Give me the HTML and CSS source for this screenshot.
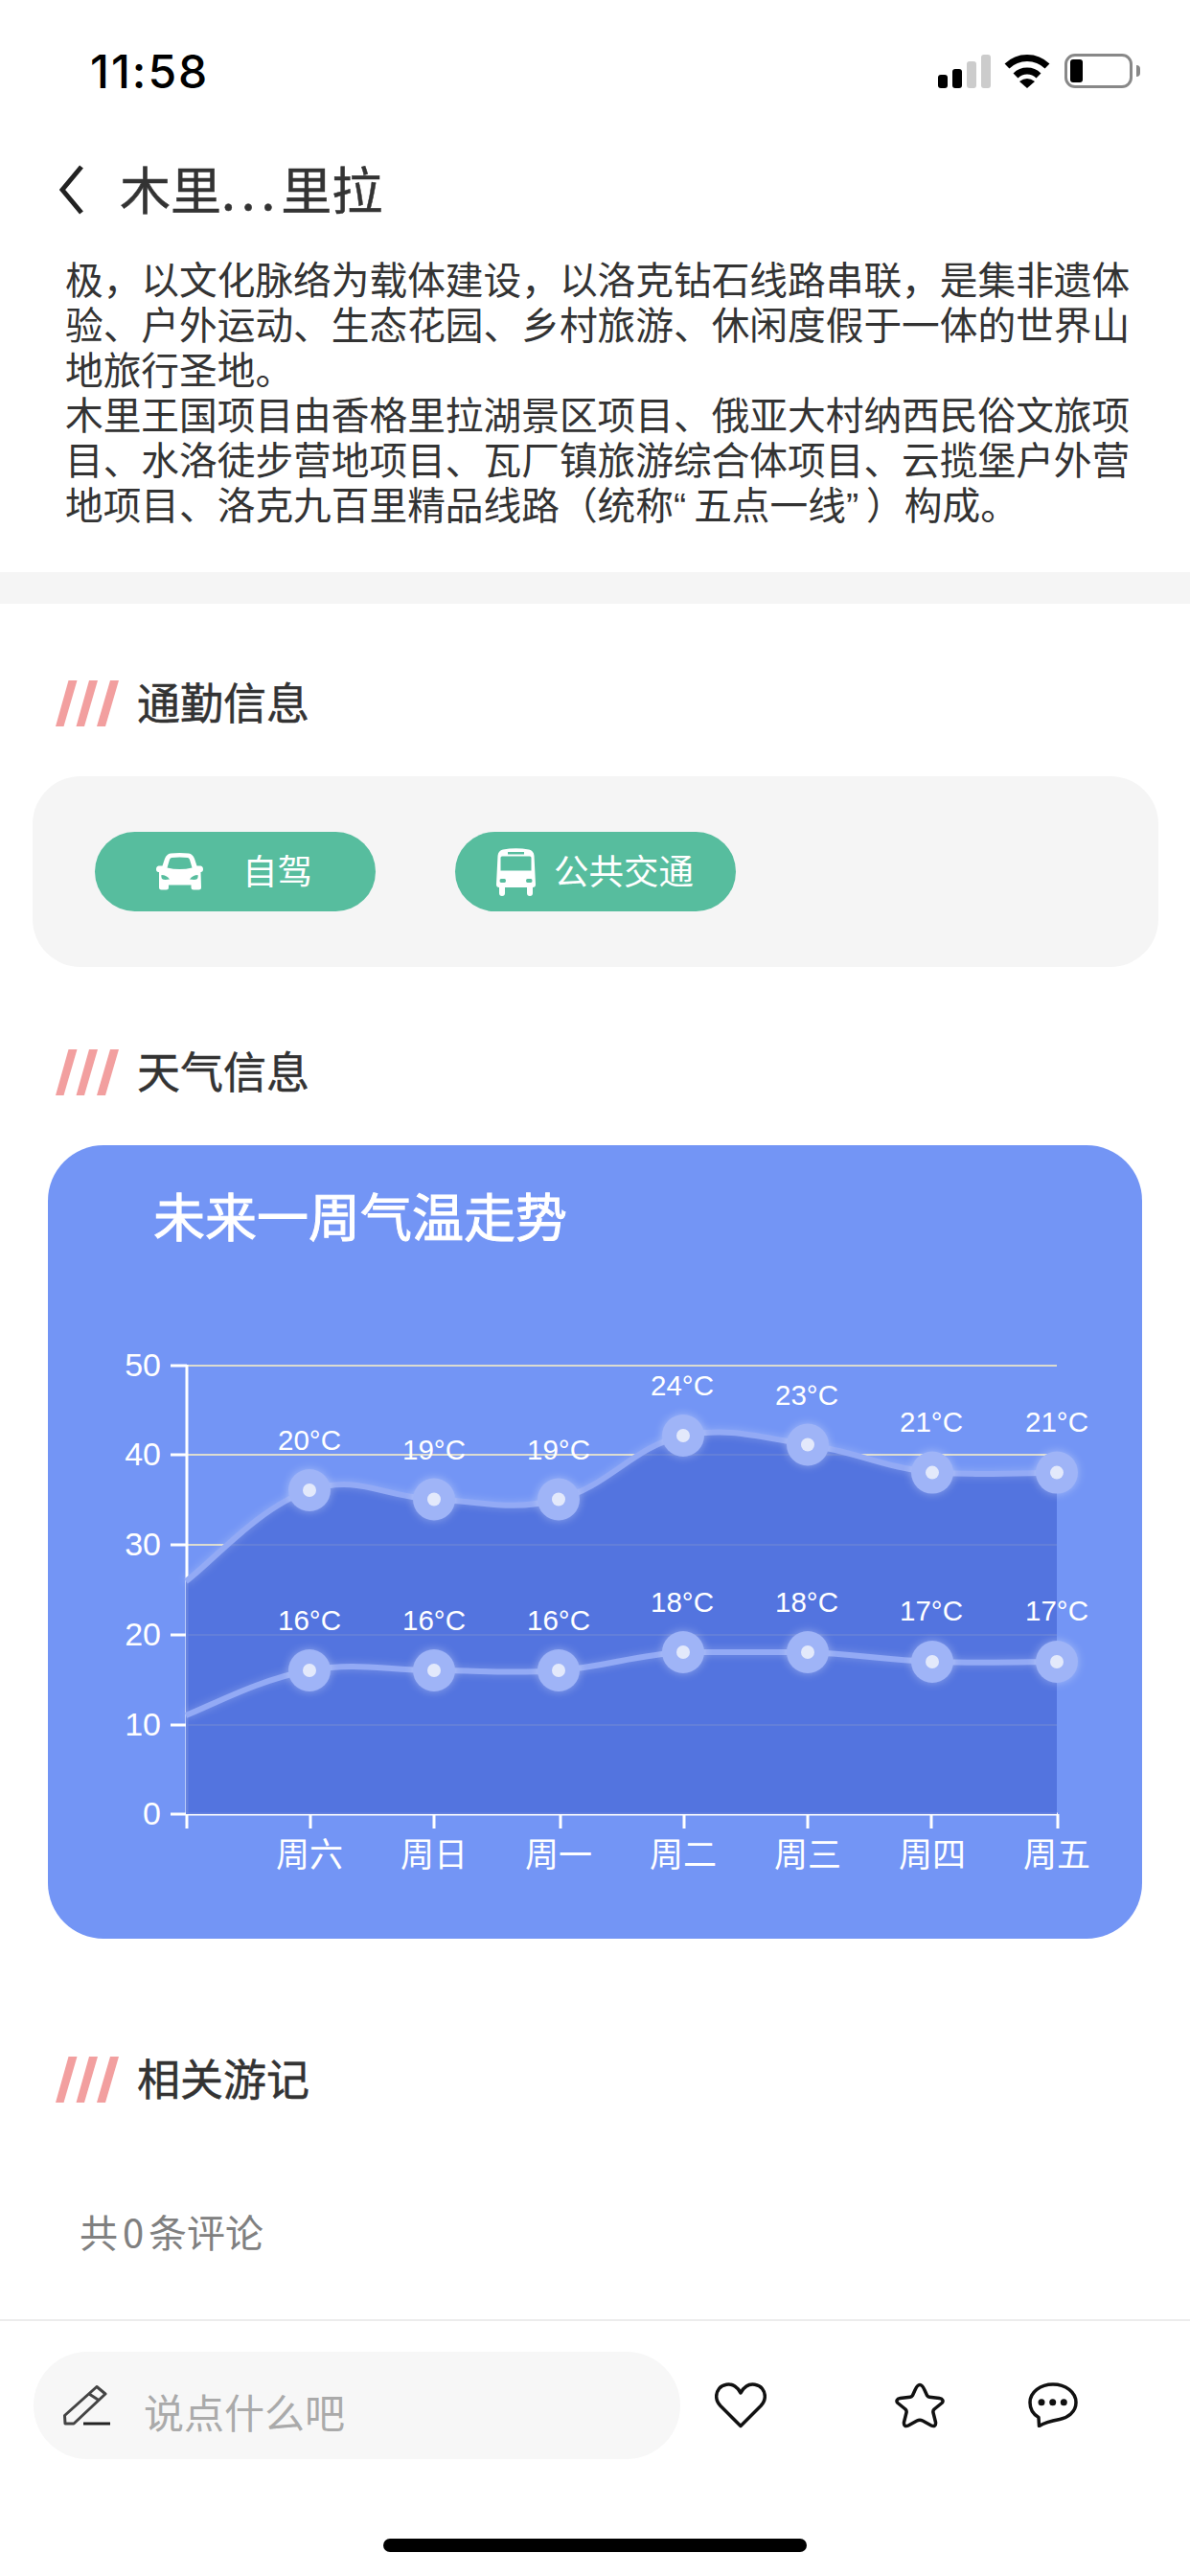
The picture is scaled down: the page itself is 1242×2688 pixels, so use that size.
FILE: index.html
```html
<!DOCTYPE html>
<html lang="zh-CN">
<head>
    <meta charset="UTF-8">
    <meta name="viewport" content="width=device-width, initial-scale=1.0">
    <title>木里香格里拉</title>
    <link rel="stylesheet" href="styles.css">
</head>
<body>
    <svg class="defs" width="0" height="0">
        <symbol id="stripes" viewBox="0 0 66 48">
            <polygon points="0,48 8.5,48 22.5,0 13.5,0"/>
            <polygon points="21.5,48 30,48 44,0 35,0"/>
            <polygon points="43,48 52,48 66,0 57,0"/>
        </symbol>
    </svg>

    <div class="status-bar">
        <div class="time">11:58</div>
        <div class="status-icons">
            <div class="signal">
                <span class="bar bar-1"></span>
                <span class="bar bar-2"></span>
                <span class="bar bar-3"></span>
                <span class="bar bar-4"></span>
            </div>
            <svg class="wifi" viewBox="0 0 48 36">
                <path class="wifi-arc" d="M3 13A30 30 0 0 1 45 13"/>
                <path class="wifi-arc" d="M12 23A17 17 0 0 1 36 23"/>
                <path d="M16 29Q24 23 32 29L24 36Z"/>
            </svg>
            <div class="battery"><span class="battery-level"></span></div>
            <span class="battery-cap"></span>
        </div>
    </div>

    <div class="nav">
        <svg class="back" viewBox="0 0 25 52"><path d="M23 2L3 26L23 50"/></svg>
        <div class="nav-title">木里<span class="dots">...</span>里拉</div>
    </div>

    <div class="desc">
        极，以文化脉络为载体建设，以洛克钻石线路串联，是集非遗体验、户外运动、生态花园、乡村旅游、休闲度假于一体的世界山地旅行圣地。<br>
        木里王国项目由香格里拉湖景区项目、俄亚大村纳西民俗文旅项目、水洛徒步营地项目、瓦厂镇旅游综合体项目、云揽堡户外营地项目、洛克九百里精品线路（统称“&thinsp;五点一线”&thinsp;）构成。
    </div>

    <div class="band"></div>

    <div class="main">
        <div class="heading heading-first">
            <svg class="stripes"><use href="#stripes"/></svg>
            <span class="heading-text">通勤信息</span>
        </div>
        <div class="commute">
            <div class="pill">
                <svg class="car" viewBox="0 0 49 39">
                    <path fill-rule="evenodd" d="M15 .5Q24.500 -.5 34 .5Q38 1 40 6L42.500 13.500H46.500Q49 14 49 17Q49 20 46.500 20L47 36Q47 38.500 44.500 38.500H39Q36.500 38.500 36.500 36V33.500H13V36Q13 38.500 10.500 38.500H5.500Q3 38.500 3 36V20H2.500Q0 20 0 17Q0 14 2.500 13.500H6.500L9 6Q11 1 15 .5ZM16 5Q24.500 4 33 5Q34.500 5.500 35 7L37.500 15.500Q24.500 18.500 11.500 15.500L14 7Q14.500 5.500 16 5ZM5.500 23Q11 23 14 27.500Q8 28.500 6 27Q5 25 5.500 23ZM43.500 23Q38 23 35 27.500Q41 28.500 43 27Q44 25 43.500 23Z"/>
                </svg>
                <span class="pill-text">自驾</span>
            </div>
            <div class="pill">
                <svg class="bus" viewBox="0 0 41 50">
                    <path fill-rule="evenodd" d="M7 1.500Q20.500 -1 34 1.500Q39 2.500 39.500 8L41 38Q41 41 38 41V47Q38 50 35 50T32 47V41H9V47Q9 50 6 50T3 47V41Q0 41 0 38L1.500 8Q2 2.500 7 1.500ZM12 4V6.500H29V4ZM6 8.500Q4.500 8.500 4.500 10V23.500H36.500V10Q36.500 8.500 35 8.500ZM5 32Q3.500 32 3.500 34T5 36H8.500Q10 36 10 34T8.500 32ZM32.500 32Q31 32 31 34T32.500 36H36Q37.500 36 37.500 34T36 32Z"/>
                </svg>
                <span class="pill-text">公共交通</span>
            </div>
        </div>

        <div class="heading heading-weather">
            <svg class="stripes"><use href="#stripes"/></svg>
            <span class="heading-text">天气信息</span>
        </div>
        <div class="weather">
            <div class="weather-title">未来一周气温走势</div>
            <svg class="chart" viewBox="50 1330 1142 693">
                <g class="grid">
                    <line x1="195" y1="1425" x2="1103" y2="1425"/>
                    <line x1="195" y1="1518" x2="1103" y2="1518"/>
                    <line x1="195" y1="1612" x2="1103" y2="1612"/>
                    <line x1="195" y1="1706" x2="1103" y2="1706"/>
                    <line x1="195" y1="1800" x2="1103" y2="1800"/>
                </g>
                <g class="axis">
                    <line x1="195" y1="1424" x2="195" y2="1894"/>
                    <line x1="178" y1="1425" x2="195" y2="1425"/>
                    <line x1="178" y1="1518" x2="195" y2="1518"/>
                    <line x1="178" y1="1612" x2="195" y2="1612"/>
                    <line x1="178" y1="1706" x2="195" y2="1706"/>
                    <line x1="178" y1="1800" x2="195" y2="1800"/>
                    <line x1="178" y1="1893" x2="1104" y2="1893"/>
                    <line x1="324" y1="1893" x2="324" y2="1908"/>
                    <line x1="453" y1="1893" x2="453" y2="1908"/>
                    <line x1="585" y1="1893" x2="585" y2="1908"/>
                    <line x1="714" y1="1893" x2="714" y2="1908"/>
                    <line x1="843" y1="1893" x2="843" y2="1908"/>
                    <line x1="972" y1="1893" x2="972" y2="1908"/>
                    <line x1="1104" y1="1893" x2="1104" y2="1908"/>
                    <line x1="195" y1="1893" x2="195" y2="1908"/>
                </g>
                <path class="area" d="M194 1650C220 1631 271 1572 323 1555C375 1538 401 1562.600 453 1564.500C505 1566.400 531 1577.800 583 1564.500C635 1551.200 661 1509.400 713 1498C765 1489 791 1499.800 843 1507.500C895 1515.200 921 1530.800 973 1536.600C1025 1540 1077 1536.600 1103 1536.600V1893H194Z"/>
                <path class="curve" d="M194 1650C220 1631 271 1572 323 1555C375 1538 401 1562.600 453 1564.500C505 1566.400 531 1577.800 583 1564.500C635 1551.200 661 1509.400 713 1498C765 1489 791 1499.800 843 1507.500C895 1515.200 921 1530.800 973 1536.600C1025 1540 1077 1536.600 1103 1536.600"/>
                <path class="curve" d="M194 1790C220 1780 271 1752 323 1743C375 1734 401 1743 453 1743C505 1743 531 1747 583 1743C635 1739 661 1727 713 1724C765 1724 791 1724 843 1724C895 1726 921 1732 973 1734C1025 1736 1077 1734 1103 1734"/>
                <g class="dot-ring">
                    <circle cx="323" cy="1555" r="22"/><circle cx="453" cy="1564.500" r="22"/><circle cx="583" cy="1564.500" r="22"/><circle cx="713" cy="1498" r="22"/><circle cx="843" cy="1507.500" r="22"/><circle cx="973" cy="1536.600" r="22"/><circle cx="1103" cy="1536.600" r="22"/>
                    <circle cx="323" cy="1743" r="22"/><circle cx="453" cy="1743" r="22"/><circle cx="583" cy="1743" r="22"/><circle cx="713" cy="1724" r="22"/><circle cx="843" cy="1724" r="22"/><circle cx="973" cy="1734" r="22"/><circle cx="1103" cy="1734" r="22"/>
                </g>
                <g class="dot-core">
                    <circle cx="323" cy="1555" r="7"/><circle cx="453" cy="1564.500" r="7"/><circle cx="583" cy="1564.500" r="7"/><circle cx="713" cy="1498" r="7"/><circle cx="843" cy="1507.500" r="7"/><circle cx="973" cy="1536.600" r="7"/><circle cx="1103" cy="1536.600" r="7"/>
                    <circle cx="323" cy="1743" r="7"/><circle cx="453" cy="1743" r="7"/><circle cx="583" cy="1743" r="7"/><circle cx="713" cy="1724" r="7"/><circle cx="843" cy="1724" r="7"/><circle cx="973" cy="1734" r="7"/><circle cx="1103" cy="1734" r="7"/>
                </g>
                <g class="temp">
                    <text x="323" y="1502">20°C</text><text x="453" y="1512">19°C</text><text x="583" y="1512">19°C</text><text x="712" y="1445">24°C</text><text x="842" y="1455">23°C</text><text x="972" y="1483">21°C</text><text x="1103" y="1483">21°C</text>
                    <text x="323" y="1690">16°C</text><text x="453" y="1690">16°C</text><text x="583" y="1690">16°C</text><text x="712" y="1671">18°C</text><text x="842" y="1671">18°C</text><text x="972" y="1680">17°C</text><text x="1103" y="1680">17°C</text>
                </g>
                <g class="y-label">
                    <text x="168" y="1424">50</text><text x="168" y="1517">40</text><text x="168" y="1611">30</text><text x="168" y="1705">20</text><text x="168" y="1799">10</text><text x="168" y="1892">0</text>
                </g>
                <g class="x-label">
                    <text x="323" y="1935">周六</text><text x="453" y="1935">周日</text><text x="583" y="1935">周一</text><text x="713" y="1935">周二</text><text x="843" y="1935">周三</text><text x="973" y="1935">周四</text><text x="1103" y="1935">周五</text>
                </g>
            </svg>
        </div>

        <div class="heading heading-notes">
            <svg class="stripes"><use href="#stripes"/></svg>
            <span class="heading-text">相关游记</span>
        </div>
        <div class="count">共 0 条评论</div>
    </div>

    <div class="footer">
        <div class="footer-row">
            <div class="input">
                <svg class="pencil" viewBox="0 0 50 42">
                    <path d="M35 1.500L44 9L11 40H2L1.500 31.500ZM27 9L37 15.500"/>
                    <path class="pencil-line" d="M21 40H49"/>
                </svg>
                <span class="placeholder">说点什么吧</span>
            </div>
            <svg class="act act-heart" viewBox="0 0 54 48">
                <path d="M27 45.500L6 24.500C0 18 1 11 4.500 6.500C8 2 16 .5 21 4C24 6 26 8.500 27 11C28 8.500 30 6 33 4C38 .5 46 2 49.500 6.500C53 11 54 18 48 24.500Z"/>
            </svg>
            <svg class="act act-star" viewBox="0 0 52 48">
                <path d="M26 2.500C28 2.500 29.500 4.500 31 8L33.500 13.500Q34.500 15 36 15.200L46.500 16.500C50 17 51 19.500 49 21.500L41 28Q39.500 29.500 40 31.500L42.500 41.500C43 45 41 46.500 38 45L29 40Q26 38.500 23 40L14 45C11 46.500 9 45 9.500 41.500L12 31.500Q12.500 29.500 11 28L3 21.500C1 19.500 2 17 5.500 16.500L16 15.200Q17.500 15 18.500 13.500L21 8C22.500 4.500 24 2.500 26 2.500Z"/>
            </svg>
            <svg class="act act-chat" viewBox="0 0 52 47">
                <path d="M26 2C39 2 50 10 50 21C50 31 41 37 33 38.500C25 40 17 42 11.500 45.500L11 36.500C5 33 2 28 2 21C2 10 13 2 26 2Z"/>
                <circle class="chat-dot" cx="14" cy="20.700" r="3.500"/>
                <circle class="chat-dot" cx="25.700" cy="20.700" r="3.500"/>
                <circle class="chat-dot" cx="37.300" cy="20.700" r="3.500"/>
            </svg>
        </div>
        <div class="home-bar"></div>
    </div>
</body>
</html>
```

FILE: styles.css
```css
body {
    margin: 0;
    width: 1242px;
    height: 2688px;
    display: flex;
    flex-direction: column;
    background: #fff;
    color: #333;
    font-family: "Noto Sans CJK SC", "Liberation Sans", sans-serif;
    overflow: hidden;
}
.defs {
    display: block;
    height: 0;
}

/* status bar */
.status-bar {
    height: 148px;
    box-sizing: border-box;
    padding: 56px 0 0 94px;
    display: flex;
    justify-content: space-between;
    align-items: flex-start;
}
.time {
    font-family: Inter, "Liberation Sans", sans-serif;
    font-size: 48px;
    font-weight: 500;
    line-height: 37px;
    letter-spacing: 2px;
    color: #000;
}
.status-icons {
    display: flex;
    align-items: flex-start;
    width: 263px;
    box-sizing: border-box;
    padding-right: 51px;
}
.signal {
    display: flex;
    align-items: flex-end;
    gap: 5px;
    height: 36px;
    margin-right: 14px;
}
.bar {
    width: 10px;
    border-radius: 3px;
    background: #000;
}
.bar-1 { height: 14px; }
.bar-2 { height: 20px; }
.bar-3 { height: 28px; background: #ccc; }
.bar-4 { height: 35px; background: #ccc; }
.wifi {
    width: 48px;
    height: 36px;
    margin-right: 15px;
}
.wifi-arc {
    fill: none;
    stroke: #000;
    stroke-width: 7;
}
.battery {
    width: 71px;
    height: 36px;
    box-sizing: border-box;
    border: 3px solid #888;
    border-radius: 11px;
    padding: 3px;
}
.battery-level {
    display: block;
    width: 13px;
    height: 24px;
    background: #000;
    border-radius: 3px;
}
.battery-cap {
    width: 4px;
    height: 12px;
    margin: 12px 0 0 4px;
    background: #888;
    border-radius: 0 4px 4px 0;
}

/* nav */
.nav {
    height: 100px;
    display: flex;
    align-items: center;
    padding-left: 62px;
}
.back {
    width: 25px;
    height: 52px;
    margin-right: 38px;
}
.back path {
    fill: none;
    stroke: #222;
    stroke-width: 5;
}
.nav-title {
    font-size: 53px;
    line-height: 60px;
    padding-bottom: 5px;
    -webkit-text-stroke: 0.5px #333;
}
.dots {
    letter-spacing: 6px;
}

.desc {
    margin: 22px 60px 45px 68px;
    font-family: "Liberation Sans", "Noto Sans CJK SC", sans-serif;
    font-size: 39.7px;
    line-height: 47px;
}
.band {
    height: 33px;
    background: #f5f5f5;
}

/* sections */
.main {
    flex: 1;
}
.heading {
    display: flex;
    align-items: center;
    height: 48px;
    padding-left: 58px;
    font-size: 45px;
}
.heading-text {
    padding-bottom: 5px;
    -webkit-text-stroke: 0.5px #333;
}
.heading-first { margin-top: 80px; }
.heading-weather { margin-top: 86px; }
.heading-notes { margin-top: 123px; }
.stripes {
    width: 66px;
    height: 48px;
    margin-right: 19px;
    fill: #f29f9f;
}
.commute {
    margin: 52px 33px 0 34px;
    height: 199px;
    box-sizing: border-box;
    padding: 58px 0 0 65px;
    display: flex;
    gap: 83px;
    background: #f5f5f5;
    border-radius: 50px;
}
.pill {
    width: 293px;
    height: 83px;
    display: flex;
    align-items: center;
    border-radius: 42px;
    background: #57bd9e;
    color: #fff;
    fill: #fff;
}
.car {
    width: 49px;
    height: 39px;
    margin: 0 41px 0 64px;
}
.bus {
    width: 41px;
    height: 50px;
    margin: 0 19px 0 43px;
}
.pill-text {
    font-size: 36.500px;
    line-height: 40px;
    padding-bottom: 3px;
}

/* weather chart */
.weather {
    margin: 52px 50px 0;
    height: 828px;
    box-sizing: border-box;
    padding-top: 38px;
    background: #7395f5;
    border-radius: 58px;
}
.weather-title {
    padding-left: 110px;
    font-size: 54px;
    line-height: 70px;
    color: #fff;
    -webkit-text-stroke: 1px #fff;
}
.chart {
    display: block;
    width: 1142px;
    height: 693px;
    margin-top: 27px;
    font-family: "Liberation Sans", "Noto Sans CJK SC", sans-serif;
}
.grid line {
    stroke: #dcdcd0;
    stroke-width: 2;
}
.axis line {
    stroke: #fff;
    stroke-width: 3;
}
.area {
    fill: #4d6fdb;
    fill-opacity: 0.85;
}
.curve {
    fill: none;
    stroke: #93aaf5;
    stroke-width: 6;
    filter: drop-shadow(0 0 4px rgba(255, 255, 255, 0.25));
}
.dot-ring {
    fill: #9fb4f7;
    filter: drop-shadow(0 0 5px rgba(255, 255, 255, 0.35));
}
.dot-core {
    fill: #e3e9fb;
}
.temp text {
    fill: #fff;
    font-size: 29.500px;
    text-anchor: middle;
    dominant-baseline: central;
}
.y-label text {
    fill: #fff;
    font-size: 34px;
    text-anchor: end;
    dominant-baseline: central;
}
.x-label text {
    fill: #fff;
    font-size: 35px;
    text-anchor: middle;
    dominant-baseline: central;
}

.count {
    margin: 110px 0 0 83px;
    font-size: 40px;
    line-height: 48px;
    word-spacing: -4px;
    color: #808080;
}

/* bottom bar */
.footer {
    height: 268px;
    box-sizing: border-box;
    border-top: 2px solid #ececec;
    padding-top: 32px;
}
.footer-row {
    display: flex;
    align-items: flex-start;
    padding-left: 35px;
}
.input {
    width: 675px;
    height: 112px;
    display: flex;
    align-items: center;
    box-sizing: border-box;
    padding-left: 31px;
    background: #f7f7f7;
    border-radius: 56px;
}
.pencil {
    width: 50px;
    height: 42px;
    margin-right: 34px;
}
.pencil path {
    fill: none;
    stroke: #444;
    stroke-width: 3;
    stroke-linejoin: round;
}
.pencil .pencil-line {
    stroke: #222;
}
.placeholder {
    font-size: 42px;
    line-height: 50px;
    margin-top: 12px;
    color: #aaa;
}
.act {
    margin-top: 32px;
    width: 54px;
    height: 48px;
}
.act path {
    fill: none;
    stroke: #111;
    stroke-width: 3.500;
    stroke-linejoin: round;
}
.act-heart { margin-left: 36px; }
.act-star { margin-left: 134px; width: 52px; }
.act-chat { margin-left: 87px; width: 52px; height: 47px; }
.chat-dot {
    fill: #111;
}
.home-bar {
    width: 442px;
    height: 14px;
    margin: 83px auto 0;
    background: #000;
    border-radius: 7px;
}
```
